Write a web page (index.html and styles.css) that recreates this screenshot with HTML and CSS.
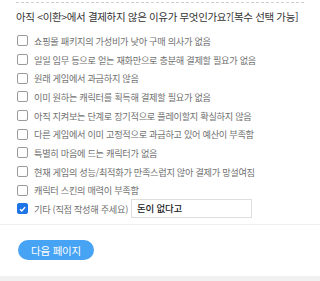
FILE: index.html
```html
<!DOCTYPE html>
<html lang="ko">
<head>
<meta charset="utf-8">
<link rel="stylesheet" href="styles.css">
</head>
<body>
<div class="page">
  <section class="question">
    <h2 class="q-title">아직 &lt;이환&gt;에서 결제하지 않은 이유가 무엇인가요?[복수 선택 가능]</h2>
    <ul class="options">
      <li class="opt"><span class="box"></span><span class="label">쇼핑몰 패키지의 가성비가 낮아 구매 의사가 없음</span></li>
      <li class="opt"><span class="box"></span><span class="label">일일 임무 등으로 얻는 재화만으로 충분해 결제할 필요가 없음</span></li>
      <li class="opt"><span class="box"></span><span class="label">원래 게임에서 과금하지 않음</span></li>
      <li class="opt"><span class="box"></span><span class="label">이미 원하는 캐릭터를 획득해 결제할 필요가 없음</span></li>
      <li class="opt"><span class="box"></span><span class="label">아직 지켜보는 단계로 장기적으로 플레이할지 확실하지 않음</span></li>
      <li class="opt"><span class="box"></span><span class="label">다른 게임에서 이미 고정적으로 과금하고 있어 예산이 부족함</span></li>
      <li class="opt"><span class="box"></span><span class="label">특별히 마음에 드는 캐릭터가 없음</span></li>
      <li class="opt"><span class="box"></span><span class="label">현재 게임의 성능/최적화가 만족스럽지 않아 결제가 망설여짐</span></li>
      <li class="opt"><span class="box"></span><span class="label">캐릭터 스킨의 매력이 부족함</span></li>
      <li class="opt"><span class="box checked"><svg viewBox="0 0 10 10" width="10" height="10"><path d="M2.2 5.2 L4.2 7.1 L7.9 2.9" fill="none" stroke="#fff" stroke-width="1.6"/></svg></span><span class="label">기타 (직접 작성해 주세요)</span><span class="other-input">돈이 없다고</span></li>
    </ul>
  </section>
  <div class="actions">
    <button class="next">다음 페이지</button>
  </div>
  <div class="footer-band"></div>
</div>
</body>
</html>
```
FILE: styles.css
```css
html, body {
  margin: 0;
  padding: 0;
  background: #fff;
}
body {
  font-family: "Noto Sans CJK KR", "Noto Sans", sans-serif;
  width: 320px;
  height: 281px;
  overflow: hidden;
}
.page {
  display: flex;
  flex-direction: column;
  height: 281px;
}
.question {
  margin: 2px 16px 0 16px;
  border-top: 1px dashed #d0d0d0;
  padding-bottom: 5px;
  border-bottom: 1px solid transparent;
}
.q-title {
  margin: 0;
  height: 28.6px;
  line-height: 28px;
  font-size: 10.5px;
  font-weight: normal;
  color: #333;
  letter-spacing: -0.35px;
  white-space: nowrap;
}
.options {
  list-style: none;
  margin: 0;
  padding: 0;
}
.opt {
  display: flex;
  align-items: center;
  height: 18.68px;
  white-space: nowrap;
}
.box {
  width: 9px;
  height: 9px;
  border: 1px solid #9a9a9a;
  border-radius: 2px;
  margin-left: 1px;
  margin-right: 6px;
  flex: none;
  display: flex;
  align-items: center;
  justify-content: center;
  box-sizing: content-box;
}
.box.checked {
  background: #1f75e6;
  border-color: #1f75e6;
}
.box svg {
  display: block;
}
.label {
  font-size: 9.2px;
  color: #707070;
  letter-spacing: -0.3px;
}
.other-input {
  margin-left: 3px;
  width: 114px;
  height: 17px;
  border: 1px solid #dedede;
  font-size: 9.5px;
  font-weight: 500;
  color: #222;
  line-height: 17px;
  padding-left: 5px;
  letter-spacing: -0.2px;
}
.actions {
  border-top: 1px solid #eeeeee;
  padding: 15px 18px 15px 18px;
  display: flex;
  flex: 1;
}
.next {
  width: 76px;
  height: 20px;
  border: none;
  border-radius: 10px;
  background: #47a3f3;
  color: #fff;
  font-family: "Noto Sans CJK KR", sans-serif;
  font-size: 10.5px;
  padding: 0;
  letter-spacing: -0.2px;
}
.footer-band {
  height: 5px;
  background: #f1f1f1;
  flex: none;
}
```
